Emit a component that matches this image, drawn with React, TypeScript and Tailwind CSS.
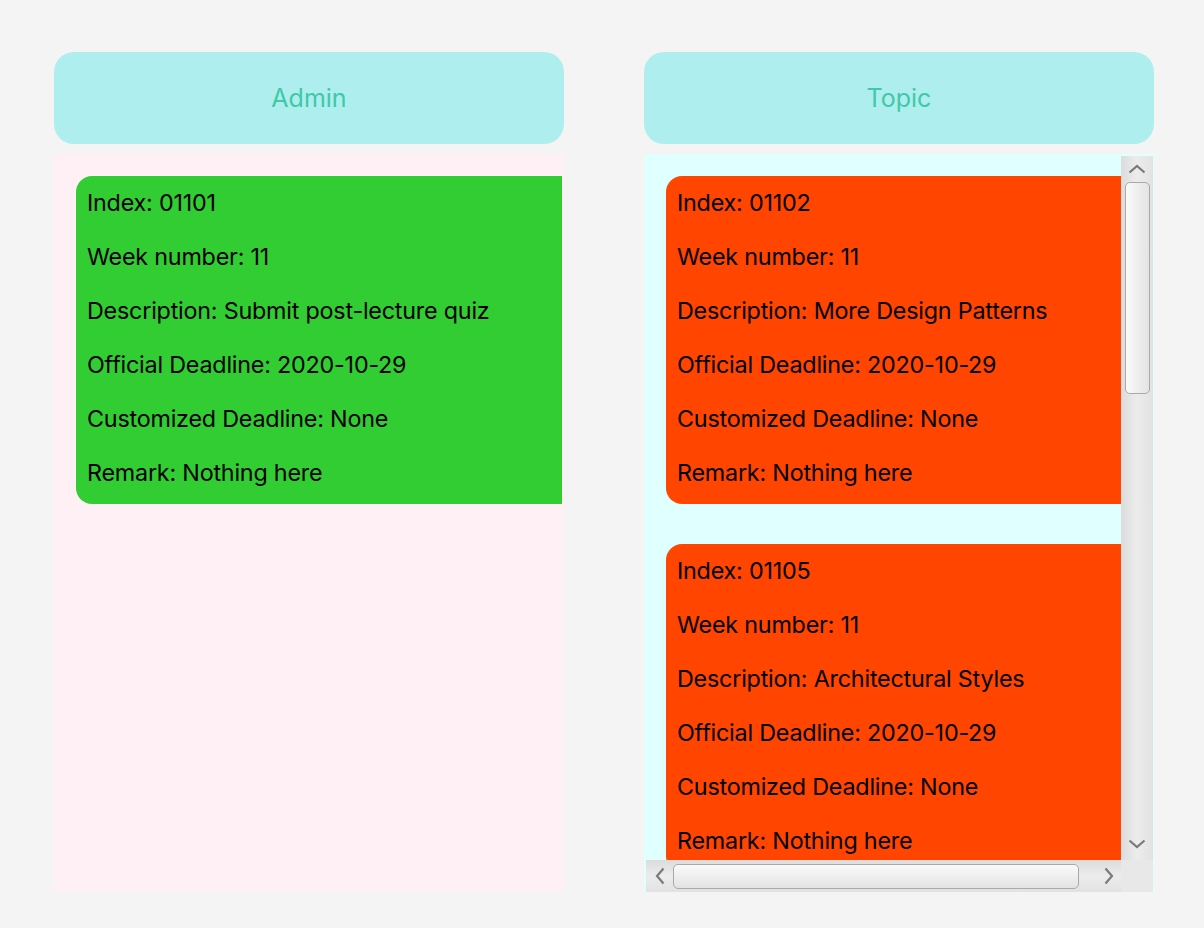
import React from "react";

type Task = { index: string; week: string; desc: string; deadline: string; custom: string; remark: string };

const adminTasks: Task[] = [
  { index: "01101", week: "11", desc: "Submit post-lecture quiz", deadline: "2020-10-29", custom: "None", remark: "Nothing here" },
];
const topicTasks: Task[] = [
  { index: "01102", week: "11", desc: "More Design Patterns", deadline: "2020-10-29", custom: "None", remark: "Nothing here" },
  { index: "01105", week: "11", desc: "Architectural Styles", deadline: "2020-10-29", custom: "None", remark: "Nothing here" },
];

function Card({ t, color }: { t: Task; color: string }) {
  const rows = [
    `Index: ${t.index}`,
    `Week number: ${t.week}`,
    `Description: ${t.desc}`,
    `Official Deadline: ${t.deadline}`,
    `Customized Deadline: ${t.custom}`,
    `Remark: ${t.remark}`,
  ];
  return (
    <div className={`w-[620px] shrink-0 rounded-l-[16px] pl-[11px] pb-[4px] ${color}`}>
      {rows.map((r) => (
        <div key={r} className="h-[54px] flex items-center text-[23.3px] tracking-[-0.2px] text-black whitespace-nowrap">
          {r}
        </div>
      ))}
    </div>
  );
}

function Header({ title }: { title: string }) {
  return (
    <div className="h-[92px] rounded-[20px] bg-[#afeeee] flex items-center justify-center pt-[2px] text-[25px] text-[#3ec9a8]">
      {title}
    </div>
  );
}

function Chevron({ dir }: { dir: "up" | "down" | "left" | "right" }) {
  const vertical = dir === "up" || dir === "down";
  const w = vertical ? 18 : 10;
  const h = vertical ? 10 : 18;
  const d = {
    up: "M1.5 8.5 L9 2 L16.5 8.5",
    down: "M1.5 1.5 L9 8 L16.5 1.5",
    left: "M8.5 1.5 L2 9 L8.5 16.5",
    right: "M1.5 1.5 L8 9 L1.5 16.5",
  }[dir];
  return (
    <svg width={w} height={h} viewBox={`0 0 ${w} ${h}`}>
      <path d={d} fill="none" stroke="#7a7a7a" strokeWidth="2.2" />
    </svg>
  );
}

export default function App() {
  return (
    <div
      className="w-[1204px] h-[928px] bg-[#f4f4f4] flex gap-[80px] pl-[54px] pt-[52px]"
      style={{ fontFamily: 'Inter, "Noto Sans", sans-serif' }}
    >
      {/* Admin column */}
      <div className="w-[510px] flex flex-col gap-[10px]">
        <Header title="Admin" />
        <div className="h-[738px] bg-[#fff0f5] pt-[22px] pl-[22px] pr-[2px]">
          <div className="overflow-hidden flex flex-col gap-[40px]">
            {adminTasks.map((t) => (
              <Card key={t.index} t={t} color="bg-[#32cd32]" />
            ))}
          </div>
        </div>
      </div>

      {/* Topic column */}
      <div className="w-[510px] flex flex-col gap-[10px]">
        <Header title="Topic" />
        <div className="h-[738px] bg-[#e0ffff] pl-[2px] pr-[1px] pt-[2px] flex flex-col">
          <div className="flex flex-1 min-h-0">
            <div className="flex-1 overflow-hidden pt-[20px] pl-[20px] flex flex-col gap-[40px]">
              {topicTasks.map((t) => (
                <Card key={t.index} t={t} color="bg-[#ff4500]" />
              ))}
            </div>
            <div className="w-[32px] bg-gradient-to-r from-[#dcdcdc] via-[#ececec] to-[#e2e2e2] flex flex-col items-center">
              <div className="h-[26px] flex items-center justify-center">
                <Chevron dir="up" />
              </div>
              <div className="w-[25px] h-[212px] rounded-[5px] border-[1.5px] border-[#a9a9a9] bg-gradient-to-r from-[#fafafa] to-[#e3e3e3]" />
              <div className="flex-1" />
              <div className="h-[22px] flex items-start justify-center pt-[1px]">
                <Chevron dir="down" />
              </div>
            </div>
          </div>
          <div className="h-[32px] flex">
            <div className="flex-1 bg-gradient-to-b from-[#dcdcdc] via-[#ececec] to-[#e2e2e2] flex items-center">
              <div className="w-[27px] flex items-center justify-center">
                <Chevron dir="left" />
              </div>
              <div className="w-[406px] h-[25px] rounded-[5px] border-[1.5px] border-[#a9a9a9] bg-gradient-to-b from-[#fafafa] to-[#e3e3e3]" />
              <div className="flex-1 flex items-center justify-end pr-[7px]">
                <Chevron dir="right" />
              </div>
            </div>
            <div className="w-[32px] bg-[#e8e8e8]" />
          </div>
        </div>
      </div>
    </div>
  );
}
